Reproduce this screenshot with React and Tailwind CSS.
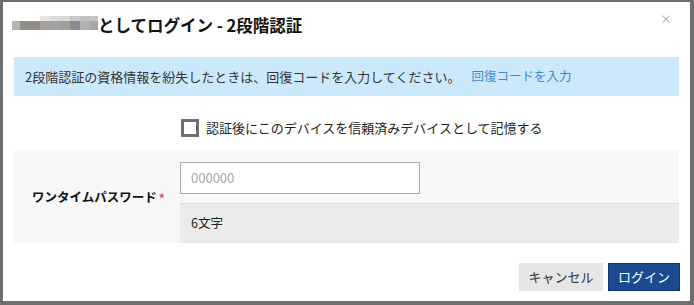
export default function App() {
  const font = { fontFamily: '"Noto Sans CJK JP", "Noto Sans", sans-serif' };
  const bottom = ["#b4b4af", "#8f8f8a", "#8f8f8a", "#a69f9a", "#a2a3a7", "#a49d98", "#8a8890", "#b2b2b5", "#a6a6aa"];
  const top = ["#ffffff", "#ffffff", "#ffffff", "#e7e3e0", "#dddddf", "#d9d9dd", "#c9c9cc", "#bfbfc2", "#c4c4c6"];
  const widths = [8, 10, 10, 10, 10, 10, 10, 10, 8];
  return (
    <div className="w-[694px] h-[305px] bg-[#6f6f6f] pt-[2px] pl-[3px] pr-[4px] pb-[4px]" style={font}>
      <div className="w-full h-full bg-white flex flex-col relative">
        <div className="h-[46px] flex items-center pl-[9px]">
          <div className="flex flex-col mt-[-5px]">
            <div className="flex h-[5px]">
              {top.map((c, i) => (
                <div key={i} style={{ width: widths[i], background: c }} />
              ))}
            </div>
            <div className="flex h-[9px]">
              {bottom.map((c, i) => (
                <div key={i} style={{ width: widths[i], background: c }} />
              ))}
            </div>
          </div>
          <span className="text-[16.5px] font-bold text-[#111] leading-none">としてログイン - 2段階認証</span>
        </div>
        <div className="absolute right-[18px] top-[11px] text-[12px] text-[#aaa] leading-none">×</div>

        <div className="mx-[11px] mt-[9px] h-[39px] bg-[#cce9fb] flex items-center px-[11px] text-[13px] text-[#333]">
          <span>2段階認証の資格情報を紛失したときは、回復コードを入力してください。</span>
          <span className="ml-[11px] text-[#3a8bd0] text-[12.5px]">回復コードを入力</span>
        </div>

        <div className="mx-[11px] mt-[22px] grid grid-cols-[167px_1fr] h-[18px]">
          <div />
          <div className="flex items-center">
            <div className="w-[18px] h-[18px] border-[3px] border-[#707070] bg-white" />
            <span className="ml-[7px] text-[13px] text-[#222]">認証後にこのデバイスを信頼済みデバイスとして記憶する</span>
          </div>
        </div>

        <div className="mx-[11px] mt-[14px] bg-[#f7f7f7] grid grid-cols-[166px_1fr] h-[93px]">
          <div className="flex items-center pl-[18px] pt-[2px]">
            <span className="text-[12.5px] font-bold text-[#111]">ワンタイムパスワード</span>
            <span className="text-[#e04b5a] text-[12px] ml-[2px] font-bold">*</span>
          </div>
          <div className="flex flex-col pt-[12px]">
            <div className="w-[240px] h-[32px] border border-[#a9a9a9] bg-white flex items-center px-[10px] text-[13px] text-[#aaa]">000000</div>
            <div className="mt-[9px] flex-1 bg-[#ebebeb] border-t border-[#d8d8d8] flex items-center px-[11px] text-[12.5px] text-[#222]">6文字</div>
          </div>
        </div>

        <div className="flex justify-end gap-[5px] mt-auto mb-[10px] mr-[10px]">
          <div className="w-[84px] h-[28px] bg-[#e6e6e6] flex items-center justify-center text-[13px] text-[#333]">キャンセル</div>
          <div className="w-[72px] h-[28px] bg-[#1b4a90] border border-[#0e336c] flex items-center justify-center text-[13px] text-white">ログイン</div>
        </div>
      </div>
    </div>
  );
}
